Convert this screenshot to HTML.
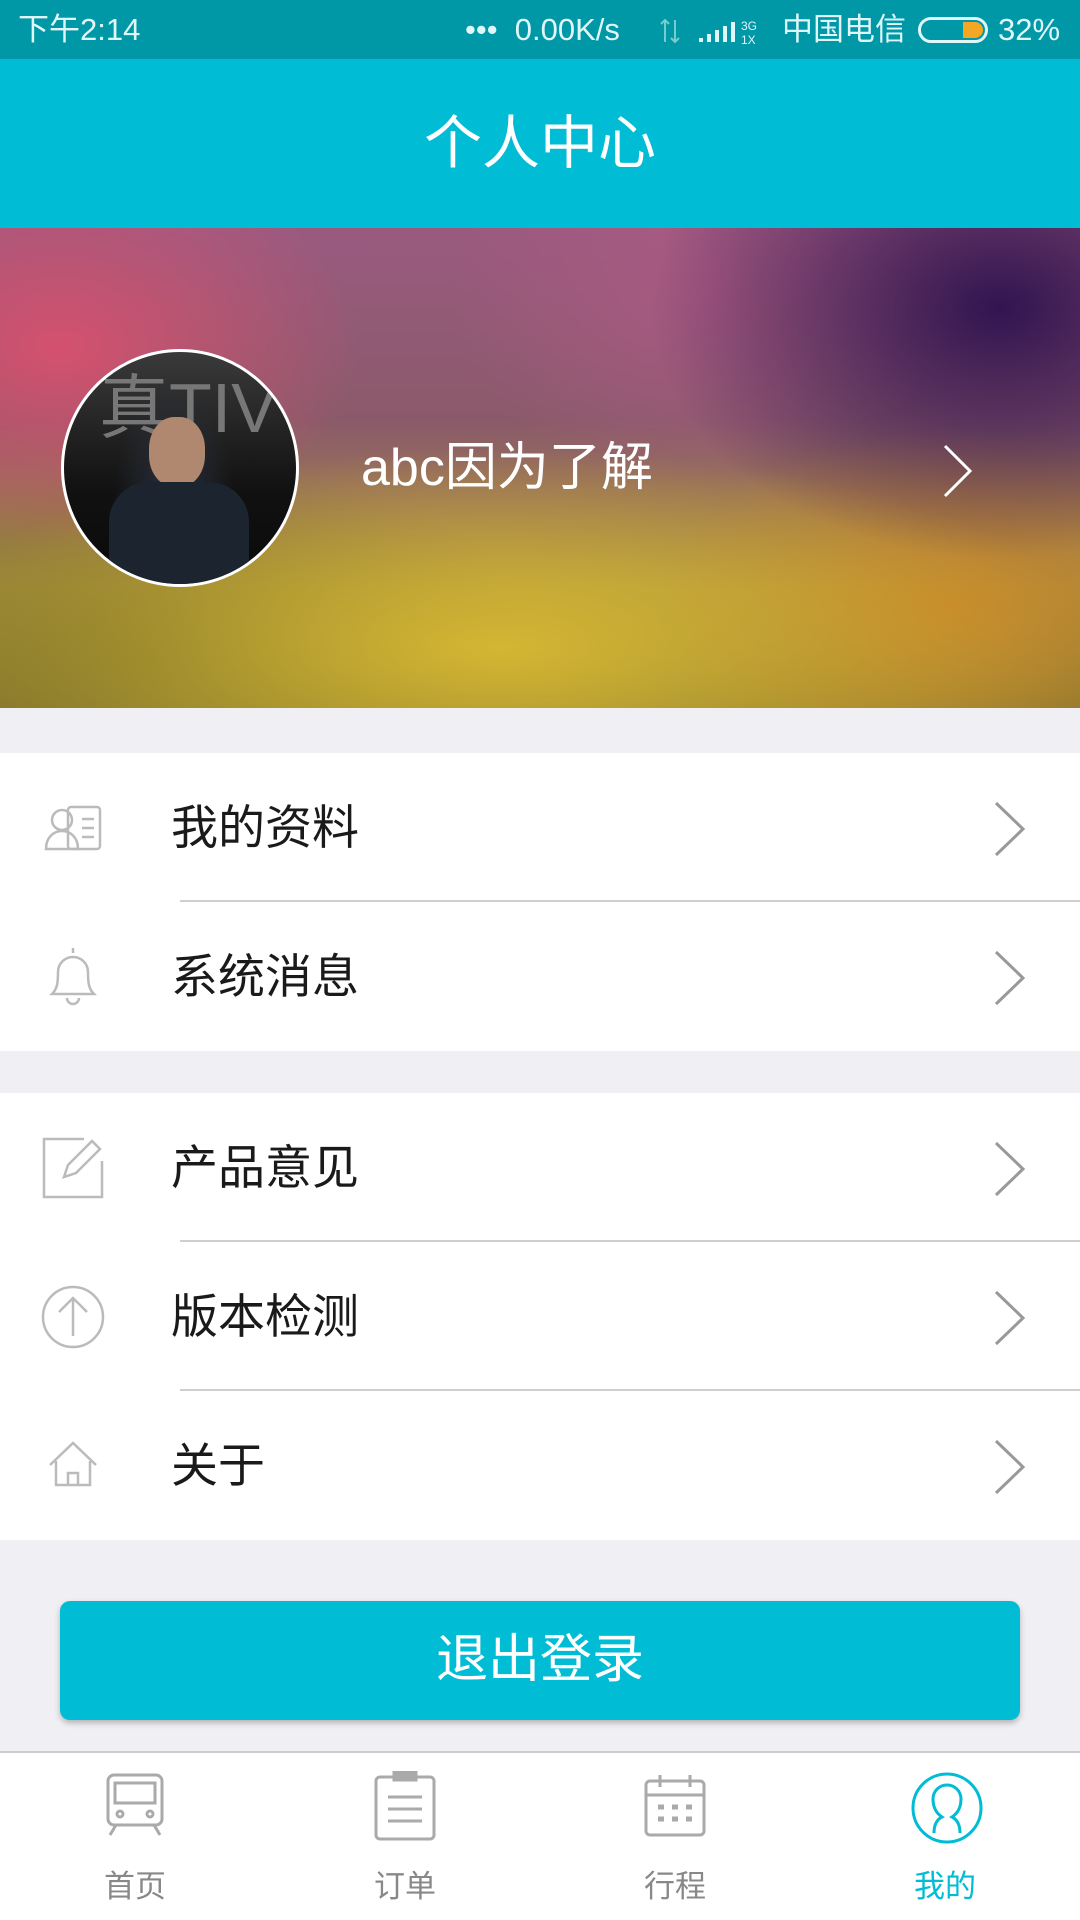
<!DOCTYPE html>
<html><head><meta charset="utf-8"><style>
*{margin:0;padding:0;box-sizing:border-box}
body{width:1080px;height:1920px;background:#efeff4;font-family:"Liberation Sans","Noto Sans CJK SC",sans-serif;position:relative;overflow:hidden}
.status{position:absolute;top:0;left:0;width:1080px;height:59px;background:#0097a7;color:#e0f7fa;font-size:31px;line-height:59px}
.header{position:absolute;top:59px;left:0;width:1080px;height:169px;background:#00bcd4;color:#fff;font-size:58px;text-align:center;line-height:169px}
.banner{position:absolute;top:228px;left:0;width:1080px;height:480px;overflow:hidden;
background:
radial-gradient(ellipse 300px 200px at 60px 120px,rgba(220,80,110,.9),transparent),
radial-gradient(ellipse 350px 250px at 1000px 80px,rgba(50,20,80,1),transparent),
radial-gradient(ellipse 250px 200px at 700px 60px,rgba(170,90,130,.9),transparent),
radial-gradient(ellipse 600px 200px at 500px 420px,rgba(215,185,50,.95),transparent),
radial-gradient(ellipse 300px 180px at 950px 380px,rgba(200,130,40,.9),transparent),
radial-gradient(ellipse 400px 200px at 150px 430px,rgba(120,110,40,.9),transparent),
linear-gradient(180deg,#9a5a80 0%,#8a5a6a 40%,#a89040 75%,#8a7a30 100%)}
.avatar{position:absolute;left:61px;top:121px;width:238px;height:238px;border-radius:50%;border:3px solid #fff;overflow:hidden;background:radial-gradient(ellipse 60px 120px at 110px 150px,#2a3240,transparent),linear-gradient(180deg,#3a3a3a,#111 60%,#0a0a0a)}
.name{position:absolute;left:361px;top:205px;color:#fff;font-size:52px;line-height:70px}
.section{position:absolute;left:0;width:1080px;background:#fff}
.row{position:relative;height:149px}
.row .t{position:absolute;left:171px;top:0;line-height:149px;font-size:47px;color:#1a1a1a}
.row .ic{position:absolute;left:40px;top:42px;width:66px;height:66px}
.row .ch{position:absolute;left:993px;top:47px}
.line{position:absolute;left:180px;right:0;bottom:0;height:2px;background:#cfcfcf}
.btn{position:absolute;left:60px;top:1601px;width:960px;height:119px;background:#00bcd4;border-radius:10px;color:#fff;font-size:52px;text-align:center;line-height:119px;box-shadow:0 3px 6px rgba(0,0,0,.25)}
.tab{position:absolute;top:1751px;left:0;width:1080px;height:169px;background:#fff;border-top:2px solid #ccc}
.ti{position:absolute;top:0;width:270px;text-align:center}
.ti span{position:absolute;top:108px;left:0;width:270px;font-size:31px;color:#888}
.ti svg{position:absolute;top:18px;left:100px}
</style></head><body>
<div class="status"><span style="position:absolute;left:18px">下午2:14</span><span style="position:absolute;left:465px">•••&nbsp; 0.00K/s</span>
<svg style="position:absolute;left:655px;top:16px" width="110" height="30"><path d="M10 4v22M6 8l4-4 4 4M20 4v22M16 22l4 4 4-4" stroke="#7cc" stroke-width="2" fill="none"/><path d="M44 26h4v-4h-4zM52 26h4v-8h-4zM60 26h4v-12h-4zM68 26h4v-16h-4zM76 26h4v-20h-4z" fill="#e0f7fa"/><text x="86" y="14" font-size="12" fill="#e0f7fa">3G</text><text x="86" y="28" font-size="12" fill="#e0f7fa">1X</text></svg>
<span style="position:absolute;left:782px">中国电信</span><span style="position:absolute;left:918px;top:17px;width:70px;height:26px;border:3px solid #e0f7fa;border-radius:13px"><span style="position:absolute;right:2px;top:2px;width:20px;height:16px;background:#f5a623;border-radius:0 8px 8px 0"></span></span><span style="position:absolute;left:998px">32%</span></div>
<div class="header">个人中心</div>
<div class="banner">
<div class="avatar"><div style="position:absolute;left:35px;top:0;color:#777;font-size:70px">真TIV</div><div style="position:absolute;left:85px;top:65px;width:56px;height:70px;border-radius:45%;background:#b08870"></div><div style="position:absolute;left:45px;top:130px;width:140px;height:120px;border-radius:40px 40px 0 0;background:#1c2430"></div></div>
<div class="name">abc因为了解</div>
<svg style="position:absolute;left:942px;top:215px" width="32" height="56"><path d="M3 3 L28 28 L3 53" stroke="#fff" stroke-width="3" fill="none"/></svg>
</div>
<div class="section" style="top:753px">
<div class="row"><svg class="ic" viewBox="0 0 66 66" fill="none" stroke="#bbb" stroke-width="2.5"><circle cx="22" cy="25" r="10"/><path d="M6 54c0-12 8-18 16-18s16 6 16 18z"/><rect x="28" y="12" width="32" height="42" rx="3"/><path d="M42 24h12M42 33h12M42 42h12"/></svg><div class="t">我的资料</div><svg class="ch" width="34" height="58"><path d="M3 3L30 29L3 55" stroke="#999" stroke-width="3" fill="none"/></svg><div class="line"></div></div>
<div class="row"><svg class="ic" viewBox="0 0 66 66" fill="none" stroke="#bbb" stroke-width="2.5"><path d="M33 4v5M12 50c5-5 6-10 6-22a15 15 0 0130 0c0 12 1 17 6 22z"/><path d="M27 54a6 6 0 0012 0"/></svg><div class="t">系统消息</div><svg class="ch" width="34" height="58"><path d="M3 3L30 29L3 55" stroke="#999" stroke-width="3" fill="none"/></svg></div>
</div>
<div class="section" style="top:1093px">
<div class="row"><svg class="ic" viewBox="0 0 66 66" fill="none" stroke="#bbb" stroke-width="2.5"><path d="M44 4H4v58h58V26"/><path d="M24 42l4-12L52 6l8 8-24 24z"/></svg><div class="t">产品意见</div><svg class="ch" width="34" height="58"><path d="M3 3L30 29L3 55" stroke="#999" stroke-width="3" fill="none"/></svg><div class="line"></div></div>
<div class="row"><svg class="ic" viewBox="0 0 66 66" fill="none" stroke="#bbb" stroke-width="2.5"><circle cx="33" cy="33" r="30"/><path d="M33 52V14M19 28l14-14 14 14"/></svg><div class="t">版本检测</div><svg class="ch" width="34" height="58"><path d="M3 3L30 29L3 55" stroke="#999" stroke-width="3" fill="none"/></svg><div class="line"></div></div>
<div class="row"><svg class="ic" viewBox="0 0 66 66" fill="none" stroke="#bbb" stroke-width="2.5"><path d="M10 32L33 10l23 22M16 28v24h34V28M28 52V40h10v12"/></svg><div class="t">关于</div><svg class="ch" width="34" height="58"><path d="M3 3L30 29L3 55" stroke="#999" stroke-width="3" fill="none"/></svg></div>
</div>
<div class="btn">退出登录</div>
<div class="tab">
<div class="ti" style="left:0"><svg width="70" height="70" viewBox="0 0 70 70" fill="none" stroke="#aaa" stroke-width="3"><rect x="8" y="4" width="54" height="50" rx="6"/><rect x="15" y="12" width="40" height="20"/><circle cx="20" cy="43" r="3"/><circle cx="50" cy="43" r="3"/><path d="M16 54l-6 10M54 54l6 10"/></svg><span>首页</span></div>
<div class="ti" style="left:270px"><svg width="70" height="70" viewBox="0 0 70 70" fill="none" stroke="#aaa" stroke-width="3"><rect x="6" y="6" width="58" height="62" rx="4"/><rect x="24" y="1" width="22" height="8" fill="#aaa"/><path d="M18 26h34M18 38h34M18 50h34"/></svg><span>订单</span></div>
<div class="ti" style="left:540px"><svg width="70" height="70" viewBox="0 0 70 70" fill="none" stroke="#aaa" stroke-width="3"><rect x="6" y="10" width="58" height="54" rx="4"/><path d="M6 24h58M20 4v12M50 4v12"/><path d="M18 36h6M32 36h6M46 36h6M18 48h6M32 48h6M46 48h6" stroke-width="5"/></svg><span>行程</span></div>
<div class="ti" style="left:810px"><svg width="74" height="74" viewBox="0 0 74 74" fill="none" stroke="#00bcd4" stroke-width="3"><circle cx="37" cy="37" r="34"/><path d="M24 62c0-10 4-14 8-16-6-4-9-10-9-18a14 14 0 0128 0c0 8-3 14-9 18 4 2 8 6 8 16"/></svg><span style="color:#00bcd4">我的</span></div>
</div>
</body></html>
